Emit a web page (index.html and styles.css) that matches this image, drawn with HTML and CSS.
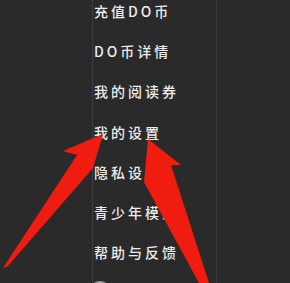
FILE: index.html
```html
<!DOCTYPE html>
<html lang="zh">
<head>
<meta charset="utf-8">
<link rel="stylesheet" href="styles.css">
</head>
<body>
<div class="screen">
  <div class="side"></div>
  <ul class="menu">
    <li class="item">充值DO币</li>
    <li class="item">DO币详情</li>
    <li class="item">我的阅读券</li>
    <li class="item">我的设置</li>
    <li class="item">隐私设置</li>
    <li class="item">青少年模式</li>
    <li class="item">帮助与反馈</li>
    <li class="item foot">
      <svg class="ring" width="24" height="24" viewBox="0 0 24 24"><circle cx="12" cy="12" r="10" fill="none" stroke="#9a9a9a" stroke-width="2"/></svg>
    </li>
  </ul>
  <div class="rest"></div>
</div>
<svg class="arrows" width="290" height="283" viewBox="0 0 290 283">
  <polygon fill="#f01c10" points="103,134 63,151 77,155 3,268 8,266 93,168"/>
  <polygon fill="#f01c10" points="148,139 181,165 171,165 209,283 199,283 144,182"/>
</svg>
</body>
</html>
```

FILE: styles.css
```css
html, body {
  margin: 0;
  padding: 0;
  background: #2a2a2a;
  width: 290px;
  height: 283px;
  overflow: hidden;
}
.screen {
  display: flex;
  height: 283px;
  font-family: "Noto Sans CJK SC", "Noto Sans", sans-serif;
}
.side {
  width: 92px;
  flex: none;
}
.menu {
  list-style: none;
  margin: -9px 0 0 0;
  padding: 0 0 0 1px;
  width: 122px;
  flex: none;
  border-left: 1px solid #3e3e3e;
  border-right: 1px solid #3a3a3a;
}
.item {
  height: 40.2px;
  line-height: 40px;
  font-size: 14px;
  letter-spacing: 3px;
  color: #ececec;
  font-weight: 500;
  white-space: nowrap;
}
.foot {
  display: flex;
  align-items: center;
}
.ring {
  margin-left: -6px;
}
.rest {
  flex: 1;
}
.arrows {
  position: absolute;
  left: 0;
  top: 0;
}
```
